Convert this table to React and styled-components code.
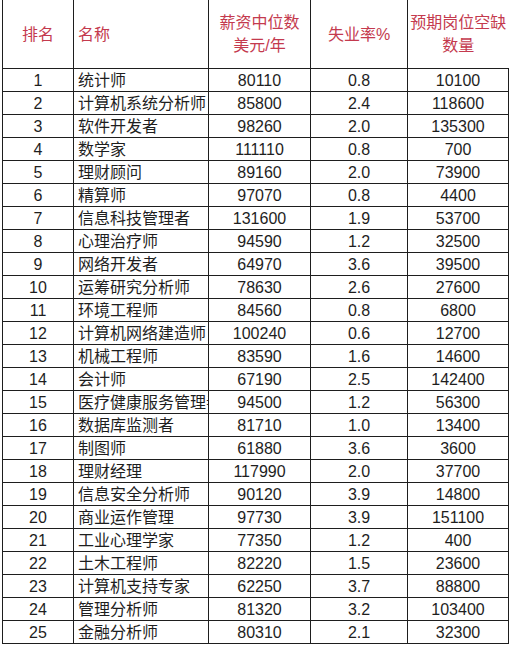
import styled, { createGlobalStyle } from 'styled-components'

const GlobalStyle = createGlobalStyle`
  html, body { margin: 0; padding: 0; background: #ffffff; }
  body { font-family: "Liberation Sans", "Noto Sans CJK SC", sans-serif; }
`

const Page = styled.div`
  padding-left: 2px;
  width: 511px;
  height: 645px;
  box-sizing: border-box;
  overflow: hidden;
`

const Table = styled.table`
  border-collapse: collapse;
  table-layout: fixed;
  width: 506px;
  color: #1e1e1e;
  font-size: 16px;
`

const HeadCell = styled.th`
  height: 68px;
  padding: 0 2px;
  font-weight: 400;
  font-size: 16px;
  line-height: 23px;
  color: #c43a4e;
  text-align: ${({ $left }) => ($left ? 'left' : 'center')};
  padding-left: ${({ $left }) => ($left ? '4px' : '2px')};
  border-left: 1.5px solid #1e1e1e;
  border-bottom: 1.5px solid #1e1e1e;
  white-space: nowrap;
  overflow: visible;
  vertical-align: middle;
`

const Cell = styled.td`
  height: 23px;
  padding: 0 ${({ $left }) => ($left ? '0 0 4px' : '2px')};
  padding-left: ${({ $left }) => ($left ? '4px' : '2px')};
  line-height: 21px;
  text-align: ${({ $left }) => ($left ? 'left' : 'center')};
  border: 1.5px solid #1e1e1e;
  white-space: nowrap;
  overflow: hidden;
  box-sizing: border-box;
`

const rows = [
  [1, '统计师', 80110, '0.8', 10100],
  [2, '计算机系统分析师', 85800, '2.4', 118600],
  [3, '软件开发者', 98260, '2.0', 135300],
  [4, '数学家', 111110, '0.8', 700],
  [5, '理财顾问', 89160, '2.0', 73900],
  [6, '精算师', 97070, '0.8', 4400],
  [7, '信息科技管理者', 131600, '1.9', 53700],
  [8, '心理治疗师', 94590, '1.2', 32500],
  [9, '网络开发者', 64970, '3.6', 39500],
  [10, '运筹研究分析师', 78630, '2.6', 27600],
  [11, '环境工程师', 84560, '0.8', 6800],
  [12, '计算机网络建造师', 100240, '0.6', 12700],
  [13, '机械工程师', 83590, '1.6', 14600],
  [14, '会计师', 67190, '2.5', 142400],
  [15, '医疗健康服务管理者', 94500, '1.2', 56300],
  [16, '数据库监测者', 81710, '1.0', 13400],
  [17, '制图师', 61880, '3.6', 3600],
  [18, '理财经理', 117990, '2.0', 37700],
  [19, '信息安全分析师', 90120, '3.9', 14800],
  [20, '商业运作管理', 97730, '3.9', 151100],
  [21, '工业心理学家', 77350, '1.2', 400],
  [22, '土木工程师', 82220, '1.5', 23600],
  [23, '计算机支持专家', 62250, '3.7', 88800],
  [24, '管理分析师', 81320, '3.2', 103400],
  [25, '金融分析师', 80310, '2.1', 32300],
]

export default function App() {
  return (
    <Page>
      <GlobalStyle />
      <Table>
        <colgroup>
          <col style={{ width: 71 }} />
          <col style={{ width: 135 }} />
          <col style={{ width: 102 }} />
          <col style={{ width: 97 }} />
          <col style={{ width: 101 }} />
        </colgroup>
        <thead>
          <tr>
            <HeadCell>排名</HeadCell>
            <HeadCell $left>名称</HeadCell>
            <HeadCell>薪资中位数<br />美元/年</HeadCell>
            <HeadCell>失业率%</HeadCell>
            <HeadCell>预期岗位空缺<br />数量</HeadCell>
          </tr>
        </thead>
        <tbody>
          {rows.map(([rank, name, pay, rate, jobs]) => (
            <tr key={rank}>
              <Cell>{rank}</Cell>
              <Cell $left>{name}</Cell>
              <Cell>{pay}</Cell>
              <Cell>{rate}</Cell>
              <Cell>{jobs}</Cell>
            </tr>
          ))}
        </tbody>
      </Table>
    </Page>
  )
}
